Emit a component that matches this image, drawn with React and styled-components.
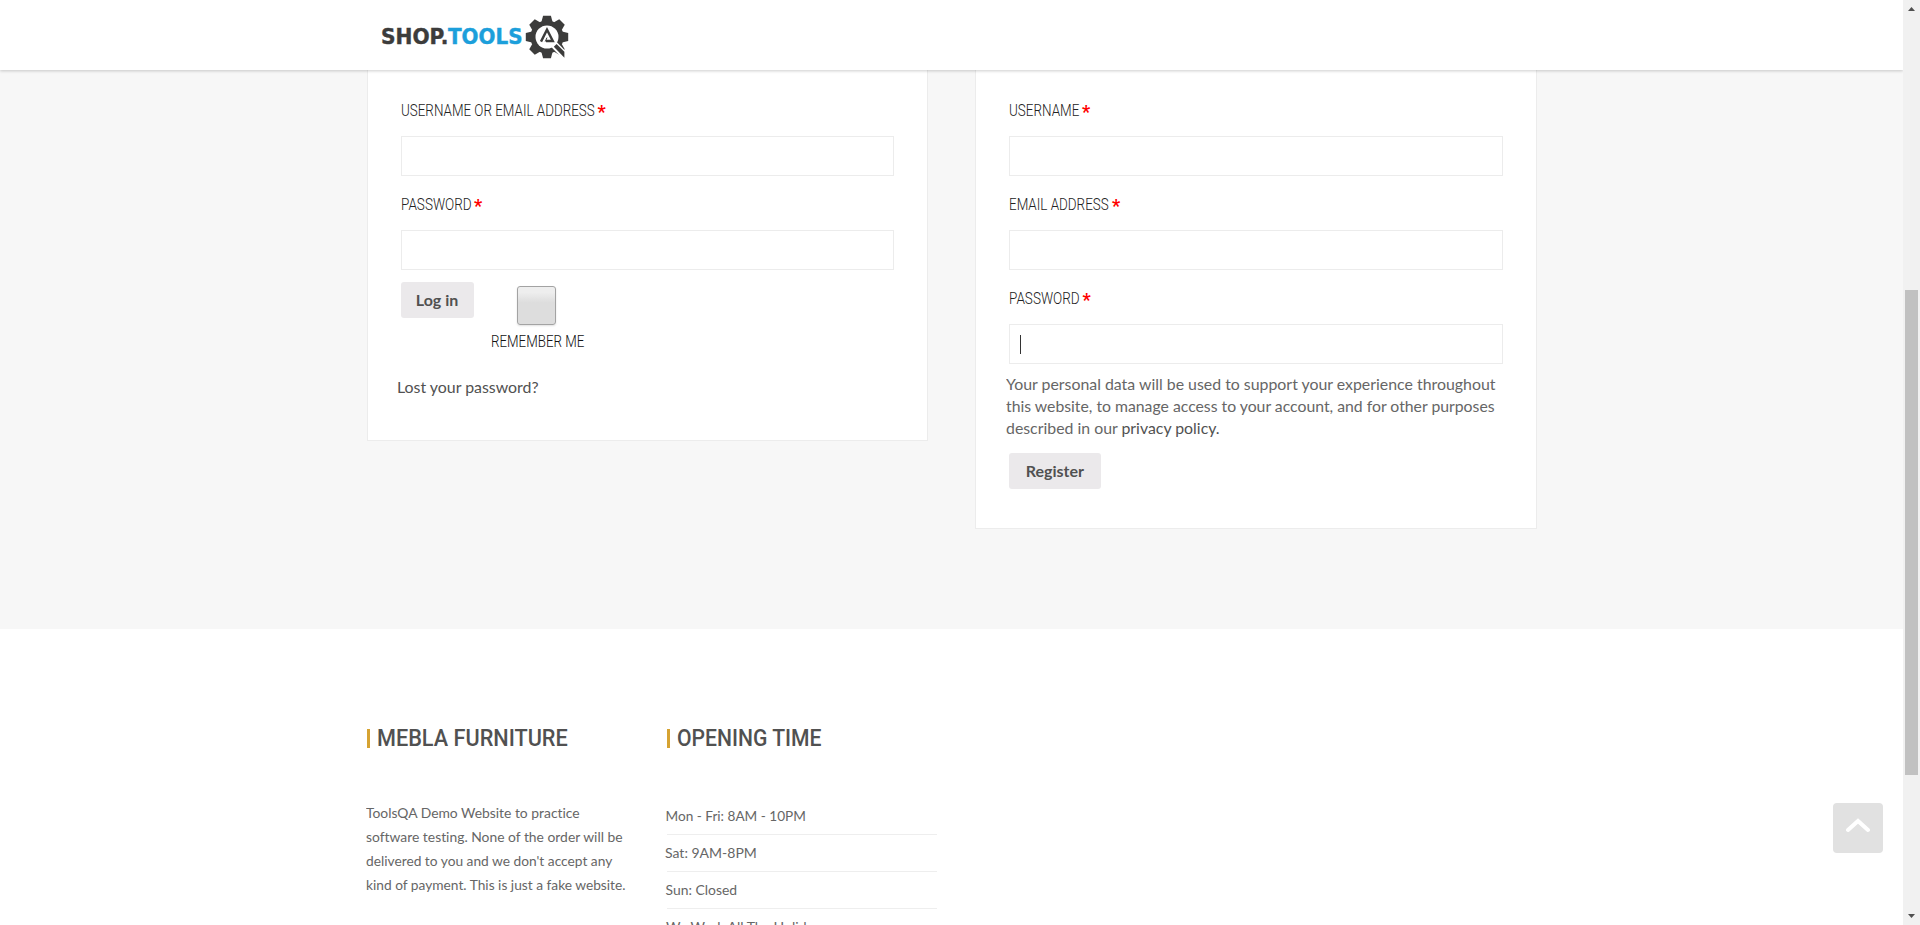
import React, { useLayoutEffect, useRef, useState } from "react";
import styled, { createGlobalStyle } from "styled-components";

const GlobalStyle = createGlobalStyle`
  *, *::before, *::after { box-sizing: border-box; }
  html, body { margin: 0; height: 100%; overflow: hidden; }
  body {
    font-family: Lato, "Liberation Sans", sans-serif;
    font-size: 16px;
    font-variant-ligatures: none;
    color: #666;
    background: #fff;
  }
  p, h3, ul { margin: 0; padding: 0; }
`;

const Window = styled.div`
  display: flex;
  width: 1920px;
  height: 925px;
  overflow: hidden;
`;
const Page = styled.div`
  flex: 1;
  display: flex;
  flex-direction: column;
  overflow: hidden;
`;
const Container = styled.div`
  width: 1170px;
  margin: 0 auto;
`;

const Header = styled.header`
  flex: none;
  z-index: 1;
  height: 70px;
  background: #fff;
  box-shadow: 0 1px 3px rgba(0, 0, 0, 0.2);
`;
const Logo = styled.div`
  display: flex;
  align-items: center;
  height: 70px;
  padding: 3px 0 0 14px;
  font: 700 20.5px/1 "DejaVu Sans", sans-serif;
`;
const LogoWord = styled.span`
  padding-top: 1px;
  color: ${(p) => p.$color};
  -webkit-text-stroke: 0.4px ${(p) => p.$color};
`;
const GearIcon = styled.svg`
  display: block;
  width: 44px;
  height: 44px;
  margin-left: 2.5px;
`;

const FitBox = styled.span`
  display: inline-block;
  flex: none;
  width: ${(p) => p.$width}px;
  white-space: nowrap;
`;
const FitInner = styled.span`
  display: inline-block;
  transform-origin: 0 50%;
`;

/* Stretches or condenses a line of text to an exact width. */
function Fit({ width, children }) {
  const ref = useRef(null);
  const [scale, setScale] = useState(1);
  useLayoutEffect(() => {
    setScale(width / ref.current.offsetWidth);
  }, [width]);
  return (
    <FitBox $width={width}>
      <FitInner ref={ref} style={{ transform: `scaleX(${scale})` }}>{children}</FitInner>
    </FitBox>
  );
}

const Account = styled.main`
  flex: none;
  height: 559px;
  background: #f7f7f7;
`;
const Columns = styled(Container)`
  display: flex;
  justify-content: space-between;
  align-items: flex-start;
`;
const Panel = styled.form`
  width: 48%;
  height: ${(p) => p.$height}px;
  padding: 23px 33px 0;
  background: #fff;
  border: 1px solid #ececec;
  border-top: 0;
`;
const Label = styled.label`
  display: flex;
  gap: 3px;
  height: 43px;
  padding-top: 1px;
  font: 300 16.5px/34px Roboto, "Liberation Sans", sans-serif;
  color: #222;
`;
const Star = styled.span`
  color: #f00;
  font: 700 18px/36px Roboto, sans-serif;
`;
const Input = styled.div`
  display: flex;
  align-items: center;
  height: 40px;
  padding-left: 10px;
  border: 1px solid #ececec;
  background: #fff;
`;
const Field = styled.div`
  height: 94px;
`;
const Caret = styled.span`
  width: 1px;
  height: 19px;
  background: #333;
`;
const Button = styled.button`
  height: 36px;
  width: ${(p) => p.$width}px;
  padding: 0;
  border: 0;
  border-radius: 3px;
  background: #ebe9eb;
  color: #515151;
  font: 700 16px/36px Lato, sans-serif;
`;
const Actions = styled.div`
  display: flex;
  align-items: flex-start;
  gap: 17px;
  margin-top: 1px;
  height: 89px;
`;
const Remember = styled.div`
  display: flex;
  flex-direction: column;
  align-items: center;
  padding-top: 4px;
  font: 300 16.5px/34px Roboto, sans-serif;
  color: #111;
`;
const Checkbox = styled.span`
  width: 39px;
  height: 39px;
  margin-right: 2px;
  border: 1px solid #a3a3a3;
  border-radius: 3px;
  background: linear-gradient(#eee 15%, #ddd 42%);
  box-shadow: 0 1px 2px rgba(0, 0, 0, 0.12);
`;
const Text = styled.p`
  display: flex;
  flex-direction: column;
  margin: ${(p) => p.$margin};
  line-height: 22px;
`;
const Link = styled.a`
  color: #515151;
`;

const Footer = styled.footer`
  flex: 1;
  overflow: hidden;
  background: #fff;
`;
const FooterColumns = styled(Container)`
  display: flex;
  gap: 30px;
  padding-top: 95px;
`;
const Widget = styled.section`
  width: 270px;
`;
const Title = styled.h3`
  display: flex;
  align-items: center;
  height: 29px;
  margin-bottom: 45px;
  color: #515151;
  font: 500 24px/29px Roboto, sans-serif;
  &::before {
    content: "";
    width: 3px;
    height: 19px;
    margin-right: 7px;
    background: #d6a332;
  }
`;
const About = styled.p`
  display: flex;
  flex-direction: column;
  margin-left: -0.5px;
  padding-top: 3px;
  font-size: 14px;
  line-height: 24px;
`;
const Hours = styled.ul`
  list-style: none;
`;
const Hour = styled.li`
  height: 37px;
  font-size: 14px;
  line-height: 35px;
  text-indent: -0.5px;
  border-bottom: 1px solid #eee;
`;
const ToTop = styled.button`
  position: fixed;
  right: 37px;
  bottom: 72px;
  display: flex;
  justify-content: center;
  width: 50px;
  height: 50px;
  padding: 15px 0 0;
  border: 0;
  border-radius: 4px;
  background: #e1e1e1;
`;

const Scrollbar = styled.div`
  flex: none;
  display: flex;
  flex-direction: column;
  align-items: center;
  width: 17px;
  background: #f1f1f1;
`;
const Arrow = styled.svg`
  display: block;
  width: 17px;
  height: 17px;
`;
const Thumb = styled.div`
  width: 13px;
  height: 485px;
  margin: 273px 0 auto;
  background: #c1c1c1;
`;

function Gear() {
  const angles = [0, 45, 90, 135, 180, 225, 270, 315];
  return (
    <GearIcon viewBox="-22 -22 44 44">
      <g fill="#3c3c3b">
        <circle r="16.6" />
        {angles.map((a) => (
          <path key={a} transform={`rotate(${a})`} d="M-5.6-15L-3.9-21.2H3.9L5.6-15Z" />
        ))}
      </g>
      <circle r="11.5" fill="#fff" />
      <path d="M6.5 7L22 23" stroke="#fff" strokeWidth="7.5" />
      <path d="M6.8 9.8L9.6 7L17.4 14.8V20.8Z" fill="#3c3c3b" />
      <path d="M-6 4.6L0-7.4L5.8 4H-1" fill="none" stroke="#3c3c3b" strokeWidth="2.4" />
      <path d="M-1.8 4.6L0 .6" fill="none" stroke="#3c3c3b" strokeWidth="1" />
    </GearIcon>
  );
}

function FormField({ label, width, focused }) {
  return (
    <Field>
      <Label>
        <Fit width={width}>{label}</Fit>
        <Star>*</Star>
      </Label>
      <Input>{focused && <Caret />}</Input>
    </Field>
  );
}

export default function App() {
  return (
    <Window>
      <GlobalStyle />
      <Page>
        <Header>
          <Container>
            <Logo>
              <LogoWord $color="#3c3c3b"><Fit width={67}>SHOP.</Fit></LogoWord>
              <LogoWord $color="#1c9fdb"><Fit width={75}>TOOLS</Fit></LogoWord>
              <Gear />
            </Logo>
          </Container>
        </Header>
        <Account>
          <Columns>
            <Panel $height={371}>
              <FormField label="USERNAME OR EMAIL ADDRESS" width={194} />
              <FormField label="PASSWORD" width={70.5} />
              <Actions>
                <Button type="button" $width={73}>Log in</Button>
                <Remember>
                  <Checkbox />
                  <Fit width={93}>REMEMBER ME</Fit>
                </Remember>
              </Actions>
              <Text $margin="5px 0 0 -4px">
                <Link><Fit width={142}>Lost your password?</Fit></Link>
              </Text>
            </Panel>
            <Panel $height={459}>
              <FormField label="USERNAME" width={70} />
              <FormField label="EMAIL ADDRESS" width={100} />
              <FormField label="PASSWORD" width={70.5} focused />
              <Text $margin="-2px 0 14px -3px">
                <Fit width={489}>Your personal data will be used to support your experience throughout</Fit>
                <Fit width={489}>this website, to manage access to your account, and for other purposes</Fit>
                <Fit width={214}>described in our <Link>privacy policy.</Link></Fit>
              </Text>
              <Button type="button" $width={92}>Register</Button>
            </Panel>
          </Columns>
        </Account>
        <Footer>
          <FooterColumns>
            <Widget>
              <Title><Fit width={190.5}>MEBLA FURNITURE</Fit></Title>
              <About>
                <Fit width={214}>ToolsQA Demo Website to practice</Fit>
                <Fit width={256.5}>software testing. None of the order will be</Fit>
                <Fit width={246.5}>delivered to you and we don't accept any</Fit>
                <Fit width={260}>kind of payment. This is just a fake website.</Fit>
              </About>
            </Widget>
            <Widget>
              <Title><Fit width={144.5}>OPENING TIME</Fit></Title>
              <Hours>
                <Hour><Fit width={140}>Mon - Fri: 8AM - 10PM</Fit></Hour>
                <Hour><Fit width={91}>Sat: 9AM-8PM</Fit></Hour>
                <Hour><Fit width={71.5}>Sun: Closed</Fit></Hour>
                <Hour>We Work All The Holidays</Hour>
              </Hours>
            </Widget>
          </FooterColumns>
        </Footer>
      </Page>
      <ToTop type="button" aria-label="Back to top">
        <svg width="24" height="15" viewBox="0 0 24 15">
          <path d="M2 12L12 3L22 12" fill="none" stroke="#fff" strokeWidth="4" strokeLinecap="round" />
        </svg>
      </ToTop>
      <Scrollbar>
        <Arrow viewBox="0 0 17 17"><path d="M5 11L8.5 7L12 11Z" fill="#505050" /></Arrow>
        <Thumb />
        <Arrow viewBox="0 0 17 17"><path d="M5 6L8.5 10L12 6Z" fill="#505050" /></Arrow>
      </Scrollbar>
    </Window>
  );
}
